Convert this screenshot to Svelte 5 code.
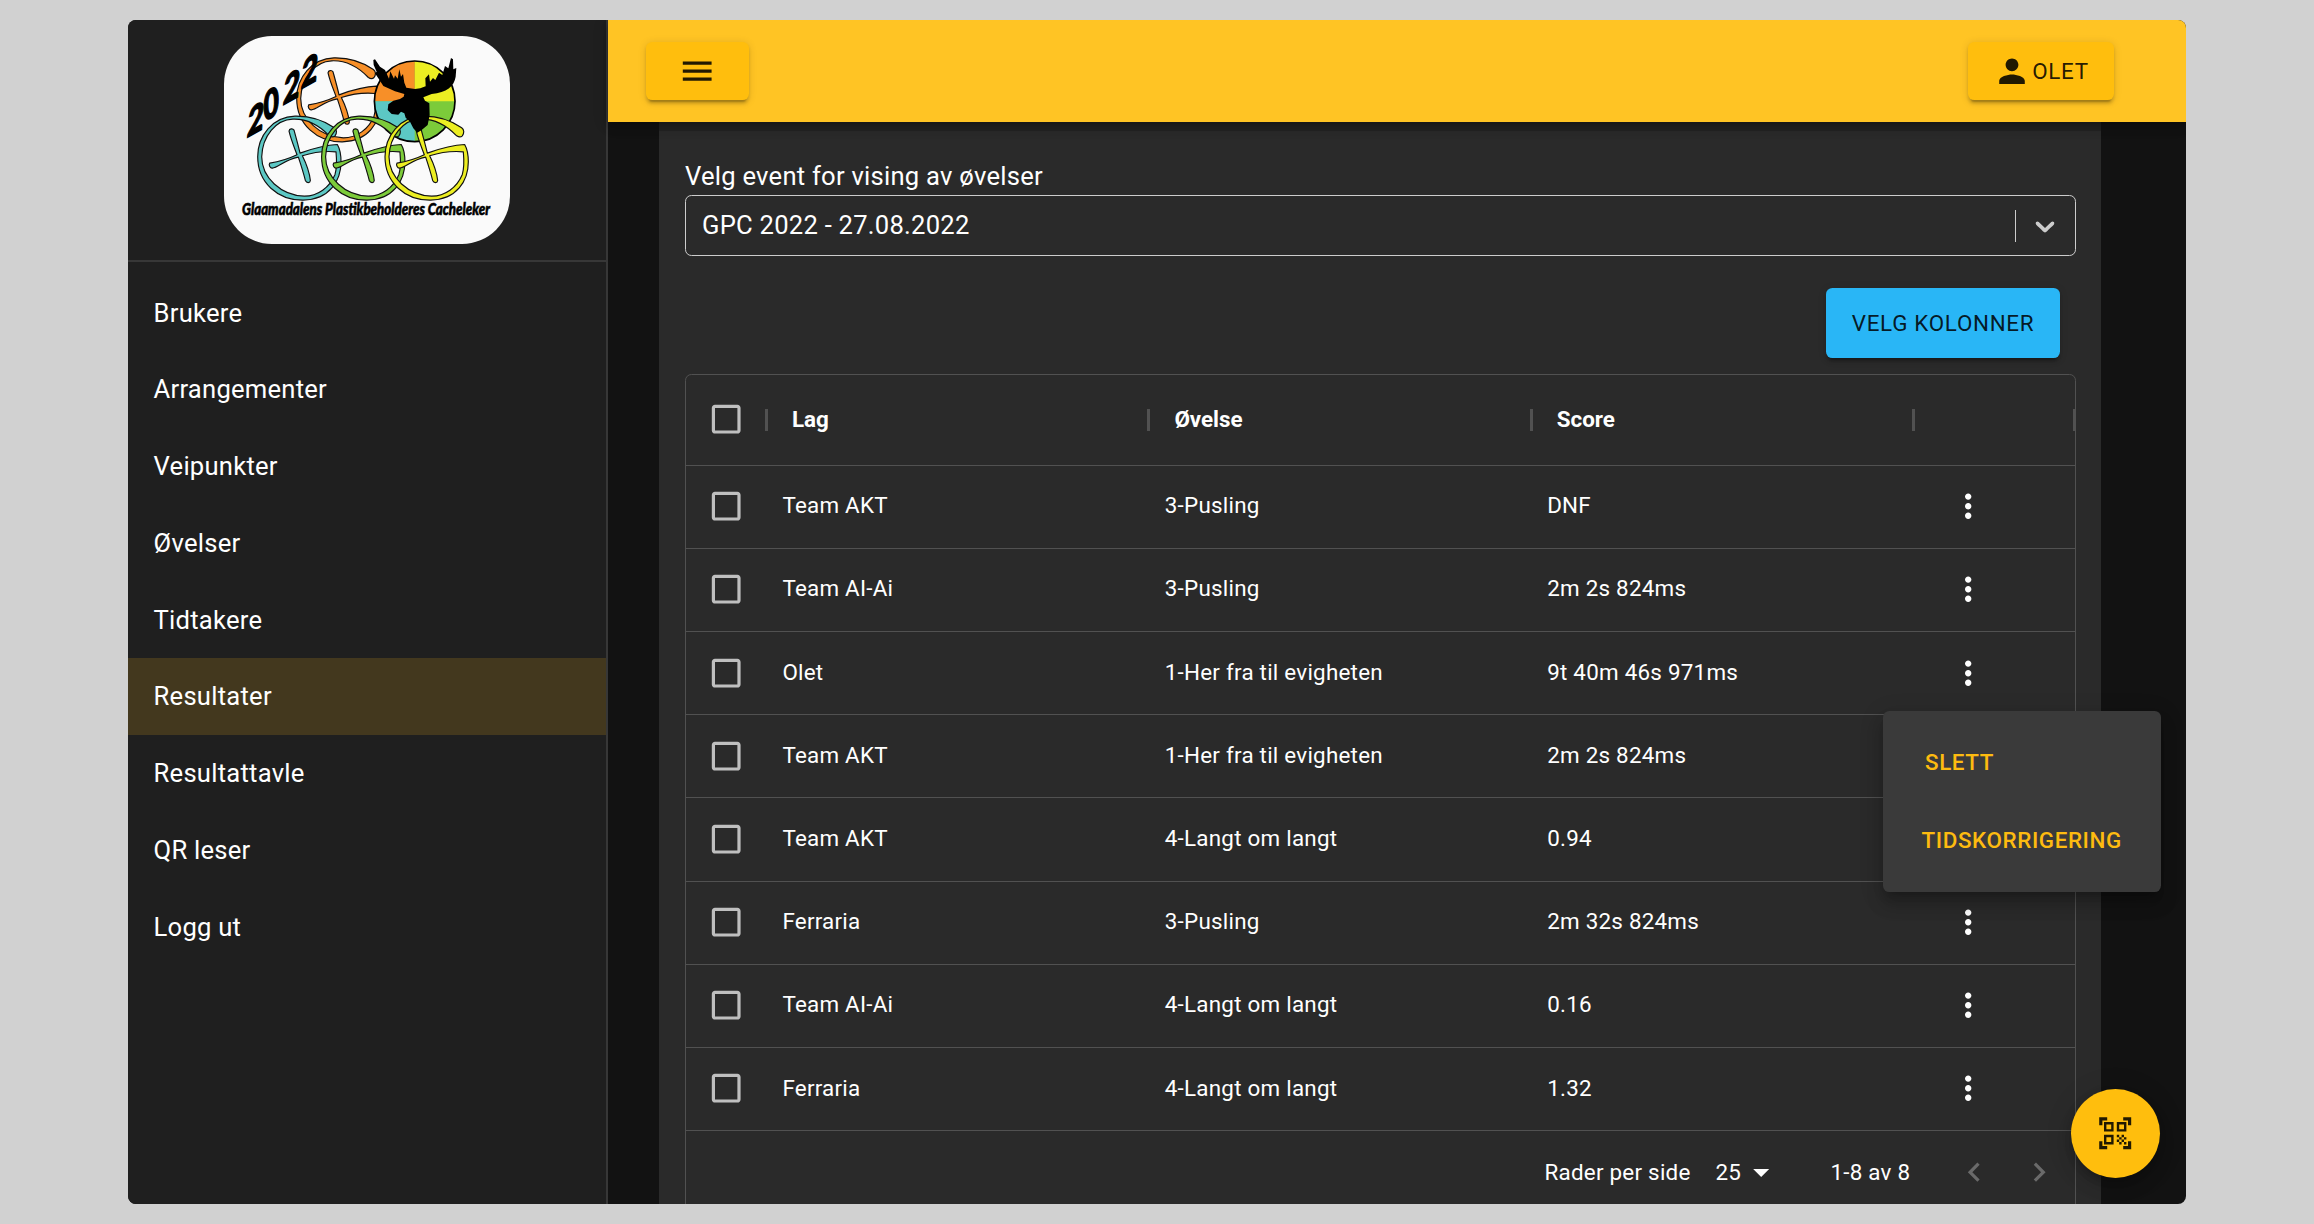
<script>
  const nav = ['Brukere', 'Arrangementer', 'Veipunkter', 'Øvelser', 'Tidtakere', 'Resultater', 'Resultattavle', 'QR leser', 'Logg ut'];
  const active = 'Resultater';
  const columns = ['Lag', 'Øvelse', 'Score'];
  const rows = [
    ['Team AKT', '3-Pusling', 'DNF'],
    ['Team AI-Ai', '3-Pusling', '2m 2s 824ms'],
    ['Olet', '1-Her fra til evigheten', '9t 40m 46s 971ms'],
    ['Team AKT', '1-Her fra til evigheten', '2m 2s 824ms'],
    ['Team AKT', '4-Langt om langt', '0.94'],
    ['Ferraria', '3-Pusling', '2m 32s 824ms'],
    ['Team AI-Ai', '4-Langt om langt', '0.16'],
    ['Ferraria', '4-Langt om langt', '1.32']
  ];
</script>

{#snippet geo(x, y, c)}
  <g transform="translate({x} {y}) scale(.3333)" fill={c} stroke="#111" stroke-width="3.500" stroke-linejoin="round">
    <path d="M232 60C238 52 238 42 230 36C200 15 160 0 112 1C45 3 0 60 0 123C0 200 60 254 137 253C215 252 250 195 250 138C250 115 246 98 239 86C205 87 165 98 127 112C122 90 115 65 109 43C105 37 95 38 94 46C100 72 110 95 118 117C95 128 62 138 36 142C32 148 38 158 44 157C62 155 80 132 122 124C130 148 138 174 143 194C147 203 157 202 158 194C155 168 145 142 134 120C165 110 200 105 235 108C237 130 238 155 232 176C216 215 180 241 140 241C70 239 12 185 12 123C14 60 55 12 105 10C150 8 186 30 215 60C221 64 228 64 232 60Z" />
  </g>
{/snippet}

{#snippet box()}
  <svg class="ic check" viewBox="0 0 24 24"><path d="M19 5v14H5V5h14m0-2H5c-1.100 0-2 .9-2 2v14c0 1.100.9 2 2 2h14c1.100 0 2-.9 2-2V5c0-1.100-.9-2-2-2z" /></svg>
{/snippet}

<div class="app">
  <aside>
    <div class="brand">
      <svg class="logo" viewBox="0 0 286 208">
        {@render geo(72.7, 21.5, '#f78f28')}
        <g>
          <circle cx="190.700" cy="65.300" r="40.300" fill="#7ccb3a" />
          <path d="M190.700 65.300V25a40.300 40.300 0 0 1 40.300 40.300Z" fill="#ecee22" />
          <path d="M190.700 65.300V25a40.300 40.300 0 0 0-40.300 40.300Z" fill="#f78f28" />
          <path d="M190.700 65.300V105.600a40.300 40.300 0 0 1-40.300-40.300Z" fill="#5cc8c4" />
          <circle cx="190.700" cy="65.300" r="40.300" fill="none" stroke="#000" stroke-width="1.700" />
        </g>
        {@render geo(33.7, 79.8, '#5cc8c4')}
        {@render geo(97.6, 79.8, '#7ccb3a')}
        {@render geo(161, 79.8, '#ecee22')}
        <path transform="translate(141 14) scale(.3333)" d="M30 28L45 50L60 60L72 86L76 64L87 86L90 76L98 86L103 58L108 80L114 72L118 98L124 113L150 117L166 115L182 109L181 85L192 73L195 95L204 84L211 90L222 68L232 75L240 48L250 55L258 24L264 28L265 58L274 54L272 80C268 108 245 128 200 132L175 142L180 152L193 160L194 195L188 225L170 240L157 248L145 235L135 215L122 203L118 190L108 185L100 194L80 192L68 180L70 163L85 152L105 147L116 140L118 132L90 124L55 108L42 88L30 70L35 65L26 45L25 30Z" />
        <g class="year">
          <text transform="matrix(.7 -.4 -.08 1 22.500 102)">2</text>
          <text transform="matrix(.66 -.36 0 1 39.500 86)">0</text>
          <text transform="matrix(.7 -.4 -.08 1 58.500 69.500)">2</text>
          <text transform="matrix(.7 -.4 -.08 1 76.500 53.500)">2</text>
        </g>
        <text class="club" x="18" y="178.500" textLength="248" lengthAdjust="spacingAndGlyphs">Glaamadalens Plastikbeholderes Cacheleker</text>
      </svg>
    </div>
    <nav>
      {#each nav as item}
        <a class:active={item === active} href="#top">{item}</a>
      {/each}
    </nav>
  </aside>

  <div class="main">
    <header>
      <button class="btn amber menu-btn" aria-label="Meny">
        <svg class="ic" viewBox="0 0 24 24"><path d="M3 18h18v-2H3v2zm0-5h18v-2H3v2zm0-7v2h18V6H3z" /></svg>
      </button>
      <button class="btn amber user-btn">
        <svg class="ic person" viewBox="0 0 24 24"><path d="M12 12c2.210 0 4-1.790 4-4s-1.790-4-4-4-4 1.790-4 4 1.790 4 4 4zm0 2c-2.670 0-8 1.340-8 4v2h16v-2c0-2.660-5.330-4-8-4z" /></svg>
        <span>OLET</span>
      </button>
    </header>

    <section class="panel">
      <span class="label">Velg event for vising av øvelser</span>
      <div class="select">
        <span class="value">GPC 2022 - 27.08.2022</span>
        <i></i>
        <svg class="chev" viewBox="0 0 20 20"><path d="M4.516 7.548c0.436-0.446 1.043-0.481 1.576 0l3.908 3.747 3.908-3.747c0.533-0.481 1.141-0.446 1.574 0 0.436 0.445 0.408 1.197 0 1.615-0.406 0.418-4.695 4.502-4.695 4.502-0.217 0.223-0.502 0.335-0.787 0.335s-0.570-0.112-0.789-0.335c0 0-4.287-4.084-4.695-4.502s-0.436-1.170 0-1.615z" /></svg>
      </div>
      <button class="btn blue">VELG KOLONNER</button>

      <div class="grid">
        <div class="row head">
          <div class="cb">{@render box()}</div>
          {#each columns as c}
            <div class="cell"><i class="sep"></i>{c}</div>
          {/each}
          <div class="cell last"><i class="sep"></i><i class="sep end"></i></div>
        </div>
        {#each rows as r}
          <div class="row">
            <div class="cb">{@render box()}</div>
            {#each r as v}
              <div class="cell">{v}</div>
            {/each}
            <div class="act">
              <svg class="ic" viewBox="0 0 24 24"><path d="M12 8c1.100 0 2-.9 2-2s-.9-2-2-2-2 .9-2 2 .9 2 2 2zm0 2c-1.100 0-2 .9-2 2s.9 2 2 2 2-.9 2-2-.9-2-2-2zm0 6c-1.100 0-2 .9-2 2s.9 2 2 2 2-.9 2-2-.9-2-2-2z" /></svg>
            </div>
          </div>
        {/each}
        <footer>
          <span class="per">Rader per side</span>
          <span class="size">25</span>
          <svg class="ic drop" viewBox="0 0 24 24"><path d="M7 10l5 5 5-5z" /></svg>
          <span class="range">1-8 av 8</span>
          <svg class="ic page" viewBox="0 0 24 24"><path d="M15.410 7.410L14 6l-6 6 6 6 1.410-1.410L10.830 12z" /></svg>
          <svg class="ic page next" viewBox="0 0 24 24"><path d="M10 6L8.590 7.410 13.170 12l-4.580 4.590L10 18l6-6z" /></svg>
        </footer>
      </div>
    </section>
  </div>

  <div class="popup">
    <button class="slett">SLETT</button>
    <button>TIDSKORRIGERING</button>
  </div>

  <button class="fab" aria-label="Skann QR">
    <svg class="ic" viewBox="0 0 24 24"><path d="M9.500 6.500v3h-3v-3h3M11 5H5v6h6V5zm-1.500 9.500v3h-3v-3h3M11 13H5v6h6v-6zm6.500-6.500v3h-3v-3h3M19 5h-6v6h6V5zm-6 8h1.500v1.500H13V13zm1.500 1.500H16V16h-1.500v-1.500zM16 13h1.500v1.500H16V13zm-3 3h1.500v1.500H13V16zm1.500 1.500H16V19h-1.500v-1.500zM16 16h1.500v1.500H16V16zm1.500-1.500H19V16h-1.500v-1.500zm0 3H19V19h-1.500v-1.500zM22 7h-2V4h-3V2h5v5zm0 15v-5h-2v3h-3v2h5zM2 22h5v-2H4v-3H2v5zM2 2v5h2V4h3V2H2z" /></svg>
  </button>
</div>

<style>
  :global(html), :global(body) { margin: 0; background: #d1d1d1; }
  * { box-sizing: border-box; }
  .app {
    position: relative;
    display: flex;
    width: 2058px;
    height: 1184px;
    margin: 20px 0 0 128px;
    border-radius: 8px;
    overflow: hidden;
    background: #121212;
    color: #fff;
    font-family: Roboto, sans-serif;
    font-size: 22.4px;
  }
  button { border: 0; font-family: inherit; }
  .ic { display: block; width: 38.4px; height: 38.4px; fill: currentColor; flex: none; }

  aside { width: 480px; flex: none; background: #1f1f1f; border-right: 2px solid #373737; }
  .brand { height: 242px; padding: 16px 0 0 96px; border-bottom: 2px solid #373737; }
  .logo { display: block; width: 286px; height: 208px; border-radius: 48px; background: #fafafa; overflow: visible; }
  .year { font: 900 40px Lato, sans-serif; stroke: #000; stroke-width: 1.6px; }
  .club { font: italic 900 17px Lato, sans-serif; stroke: #000; stroke-width: .6px; }
  nav { padding-top: 12.2px; }
  nav a {
    display: flex; align-items: center; height: 76.8px; padding: 0 25.6px;
    color: #fff; text-decoration: none; font-size: 25.6px; letter-spacing: .24px;
  }
  nav a.active { background: #43381e; padding-bottom: 1px; }

  .main { flex: 1; display: flex; flex-direction: column; min-width: 0; }
  header {
    position: relative; z-index: 1; flex: none;
    display: flex; justify-content: space-between; align-items: center;
    height: 102px; padding: 0 72px 0 38px;
    background: #ffc424;
    box-shadow: 0 3px 6px -1px rgba(0,0,0,.2), 0 6px 8px rgba(0,0,0,.14), 0 2px 16px rgba(0,0,0,.12);
  }
  .btn {
    display: flex; align-items: center; justify-content: center;
    border-radius: 6.4px; color: rgba(0,0,0,.87);
    font-size: 22.4px; font-weight: 450; letter-spacing: .7px; line-height: 39.2px;
    box-shadow: 0 4.800px 1.600px -3.200px rgba(0,0,0,.2), 0 3.200px 3.200px rgba(0,0,0,.14), 0 1.600px 8px rgba(0,0,0,.12);
  }
  .amber { height: 58.4px; background: #ffbe0d; }
  .menu-btn { width: 103px; }
  .user-btn { width: 146px; padding: 1px 1px 0 0; }
  .person { width: 40px; height: 38.4px; }

  .panel {
    flex: 1; display: flex; flex-direction: column;
    margin: 0 85px 0 51px; padding: 27px 25px 0 26px;
    border-top: 9px solid #232323;
    background: #2a2a2a;
  }
  .label { height: 37px; line-height: 37px; font-size: 25.6px; letter-spacing: .24px; }
  .select {
    display: flex; align-items: center; flex: none;
    height: 61px; padding: 0 14px 0 16px;
    border: 1px solid #ccc; border-radius: 6.4px; font-size: 25.6px; letter-spacing: .24px;
  }
  .value { flex: 1; line-height: 30px; padding-bottom: 2px; }
  .select i { width: 1px; height: 32px; background: #ccc; }
  .chev { width: 32px; height: 32px; margin-left: 13px; fill: #ccc; }
  .blue { flex: none; align-self: flex-end; width: 234px; height: 70px; padding-top: 3px; margin: 32px 16px 16px 0; background: #29b6f6; }

  .grid { border: 1px solid #515151; border-radius: 6.4px 6.4px 0 0; height: 900px; overflow: hidden; }
  .row { display: grid; grid-template-columns: 80px 382.4px 382.4px 382.4px 1fr; height: 83.2px; border-bottom: 1px solid #515151; align-items: center; }
  .head { height: 90.6px; font-weight: 700; }
  .cb { padding: 0 0 .7px 21.4px; }
  .check { color: #bfbfbf; }
  .cell { padding: 0 0 3px 16.4px; letter-spacing: .24px; white-space: nowrap; }
  .head .cell { position: relative; padding: 0 0 0 26px; letter-spacing: 0; line-height: 36px; height: 38px; }
  .sep { position: absolute; left: -1px; top: 8px; width: 3px; height: 22px; background: #515151; }
  .sep.end { left: auto; right: 0; width: 2px; }
  .act { padding: 0 0 .7px 36px; }

  footer { display: flex; align-items: center; height: 82px; letter-spacing: .24px; }
  .per { margin-left: 858.5px; width: 171px; }
  .size { width: 26px; }
  .drop { margin-left: 0; }
  .range { margin-left: 50.500px; width: 125px; }
  .page { color: #6a6a6a; }
  .next { margin-left: 26px; }

  .popup {
    position: absolute; left: 1755px; top: 691px; width: 278px; height: 181px; z-index: 2;
    display: flex; flex-direction: column; align-items: flex-start; justify-content: center; padding-left: 26.5px; gap: 19px;
    border-radius: 6.4px; background: #3a3a3a;
    box-shadow: 0 8px 8px -5px rgba(0,0,0,.2), 0 13px 16px 2px rgba(0,0,0,.14), 0 5px 22px 3px rgba(0,0,0,.12);
  }
  .popup button { padding: 0 12px; background: none; color: #fdbb10; font-size: 22.4px; line-height: 59px; font-weight: 500; letter-spacing: .6px; }
  .popup .slett { padding-left: 15.5px; }

  .fab {
    position: absolute; left: 1942.5px; top: 1068.5px; width: 89.6px; height: 89.6px; z-index: 3;
    display: flex; align-items: center; justify-content: center; padding: 0;
    border-radius: 50%; background: #ffbe0d; color: rgba(0,0,0,.87);
    box-shadow: 0 5px 8px -2px rgba(0,0,0,.2), 0 10px 16px rgba(0,0,0,.14), 0 2px 29px rgba(0,0,0,.12);
  }
</style>
